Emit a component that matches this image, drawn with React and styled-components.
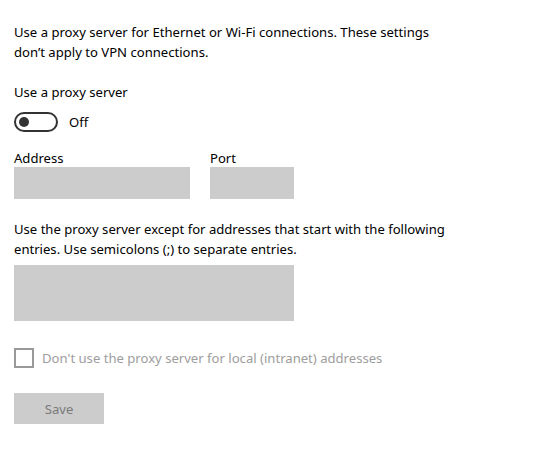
import React, { useState } from "react";
import styled, { createGlobalStyle } from "styled-components";

const GlobalStyle = createGlobalStyle`
  html, body {
    margin: 0;
    padding: 0;
    background: #ffffff;
  }
  body {
    font-family: "Noto Sans", "Open Sans", sans-serif;
    font-size: 13.1px;
    color: #000000;
  }
`;

const Page = styled.div`
  width: 547px;
  height: 464px;
  box-sizing: border-box;
  padding: 22px 14px 0 14px;
  display: flex;
  flex-direction: column;
`;

const Text = styled.p`
  margin: 0 0 ${({ $gap }) => $gap || 0}px 0;
  font-size: 13.1px;
  line-height: 20px;
  width: ${({ $width }) => $width || "auto"};
`;

const ToggleRow = styled.div`
  display: flex;
  align-items: center;
  gap: 11px;
  margin: 10px 0 18px 0;
  height: 20px;
`;

const Toggle = styled.div`
  width: 44px;
  height: 20px;
  box-sizing: border-box;
  border: 2px solid #333333;
  border-radius: 10px;
  display: flex;
  align-items: center;
  padding-left: 3px;
`;

const Thumb = styled.div`
  width: 10px;
  height: 10px;
  border-radius: 50%;
  background: #333333;
`;

const ToggleLabel = styled.span`
  font-size: 13.1px;
`;

const Fields = styled.div`
  display: flex;
  gap: 20px;
  margin-bottom: 20px;
`;

const Field = styled.div`
  display: flex;
  flex-direction: column;
`;

const Label = styled.label`
  font-size: 13.1px;
  line-height: 17px;
`;

const Input = styled.div`
  width: ${({ $width }) => $width}px;
  height: ${({ $height }) => $height || 32}px;
  background: #cccccc;
`;

const CheckRow = styled.div`
  display: flex;
  align-items: center;
  gap: 8px;
  margin: 27px 0 25px 0;
`;

const Box = styled.div`
  width: 20px;
  height: 20px;
  box-sizing: border-box;
  border: 2px solid #999999;
`;

const CheckLabel = styled.span`
  font-size: 13.1px;
  color: #9d9d9d;
`;

const SaveButton = styled.button`
  width: 90px;
  height: 31px;
  border: none;
  background: #cccccc;
  color: #7a7a7a;
  font-family: "Noto Sans", "Open Sans", sans-serif;
  font-size: 13.1px;
  padding: 0;
`;

const App = () => {
  const [on] = useState(false);

  return (
    <>
      <GlobalStyle />
      <Page>
        <Text $gap={20} $width="428px">
          Use a proxy server for Ethernet or Wi-Fi connections. These settings
          don’t apply to VPN connections.
        </Text>
        <Text>Use a proxy server</Text>
        <ToggleRow>
          <Toggle>
            <Thumb />
          </Toggle>
          <ToggleLabel>{on ? "On" : "Off"}</ToggleLabel>
        </ToggleRow>
        <Fields>
          <Field>
            <Label>Address</Label>
            <Input $width={176} />
          </Field>
          <Field>
            <Label>Port</Label>
            <Input $width={84} />
          </Field>
        </Fields>
        <Text $gap={6} $width="440px">
          Use the proxy server except for addresses that start with the following
          entries. Use semicolons (;) to separate entries.
        </Text>
        <Input $width={280} $height={56} />
        <CheckRow>
          <Box />
          <CheckLabel>Don't use the proxy server for local (intranet) addresses</CheckLabel>
        </CheckRow>
        <SaveButton disabled>Save</SaveButton>
      </Page>
    </>
  );
};

export default App;
